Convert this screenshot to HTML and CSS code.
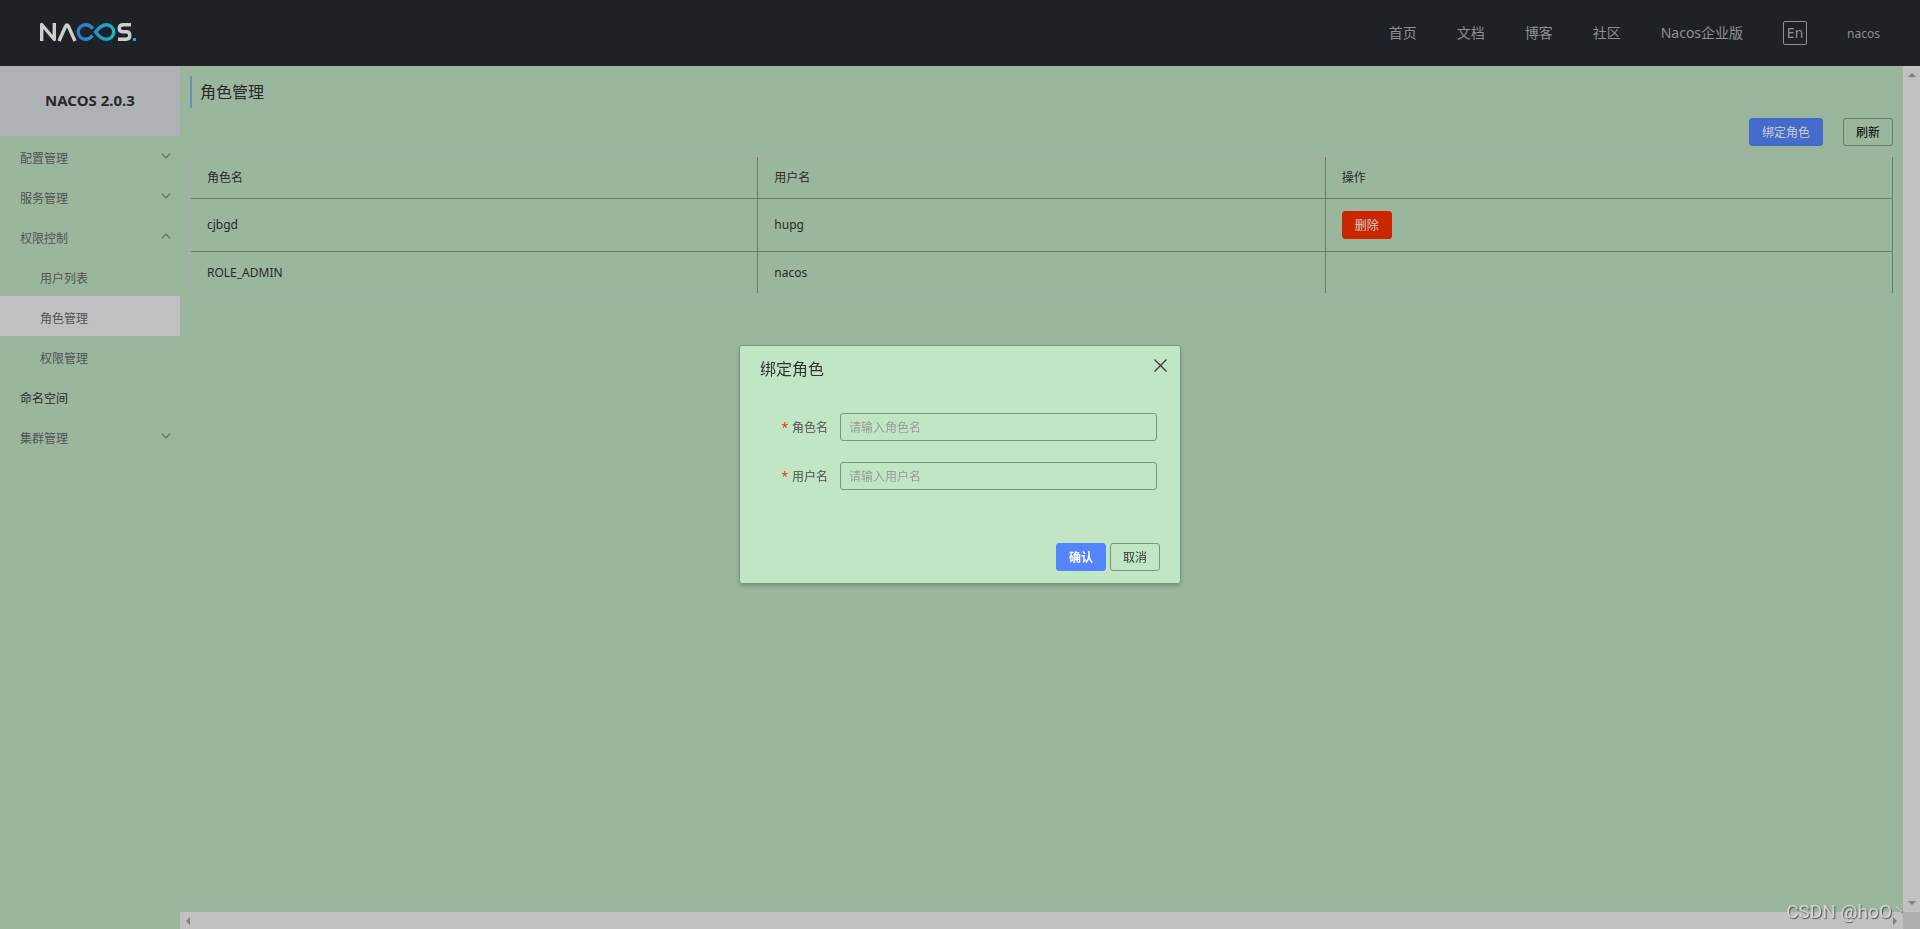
FILE: index.html
```html
<!DOCTYPE html>
<html lang="zh-CN">
<head>
<meta charset="utf-8">
<title>Nacos</title>
<link rel="stylesheet" href="styles.css">
</head>
<body>
<div class="app">
  <header class="header">
    <a class="logo" href="#" aria-label="Nacos">
      <svg width="98" height="20" viewBox="0 0 98 20" fill="none" stroke-width="3.4" stroke-linejoin="round">
        <defs>
          <linearGradient id="loop" gradientUnits="userSpaceOnUse" x1="36" y1="0" x2="76" y2="0">
            <stop offset="0" stop-color="#3571d2"/>
            <stop offset="1" stop-color="#13b9c9"/>
          </linearGradient>
        </defs>
        <g stroke="#cdcdcd">
          <path d="M1.7 19V2.5L14.3 17.500V1"/>
          <path d="M19 19L25.500 4.500Q27 1.500 28.500 4.500L35 19"/>
          <path d="M91 2.700H83.500Q79.200 2.700 79.200 6.200T83.500 9.800H86Q89.800 9.800 89.800 13.500T86 17.300H78"/>
        </g>
        <path stroke="url(#loop)" d="M53 6.500Q49.500 2.700 45.500 2.700A7.300 7.300 0 0 0 45.500 17.300Q49.500 17.300 52.500 13.500"/>
        <path stroke="url(#loop)" d="M55.500 10Q61 2.700 66.500 2.700A7.300 7.300 0 0 1 66.500 17.300Q61 17.300 55.500 10Z"/>
        <rect x="93" y="16" width="3" height="3" fill="#13b9c9"/>
      </svg>
    </a>
    <nav class="nav">
      <a href="#">首页</a>
      <a href="#">文档</a>
      <a href="#">博客</a>
      <a href="#">社区</a>
      <a href="#">Nacos企业版</a>
      <button class="lang" type="button">En</button>
      <a class="user" href="#">nacos</a>
    </nav>
  </header>
  <div class="body">
    <aside class="sidebar">
      <h1 class="version">NACOS 2.0.3</h1>
      <ul class="menu">
        <li><a href="#">配置管理<svg class="arrow" viewBox="0 0 8 5"><path d="M.5.5L4 4L7.500.5"/></svg></a></li>
        <li><a href="#">服务管理<svg class="arrow" viewBox="0 0 8 5"><path d="M.5.5L4 4L7.500.5"/></svg></a></li>
        <li><a href="#">权限控制<svg class="arrow" viewBox="0 0 8 5"><path d="M.5 4.500L4 1L7.500 4.500"/></svg></a>
          <ul class="submenu">
            <li><a href="#">用户列表</a></li>
            <li><a class="active" href="#">角色管理</a></li>
            <li><a href="#">权限管理</a></li>
          </ul>
        </li>
        <li><a class="plain" href="#">命名空间</a></li>
        <li><a href="#">集群管理<svg class="arrow" viewBox="0 0 8 5"><path d="M.5.5L4 4L7.500.5"/></svg></a></li>
      </ul>
    </aside>
    <div class="viewport">
      <main class="content">
        <h2 class="page-title">角色管理</h2>
        <div class="toolbar">
          <button class="btn primary" type="button">绑定角色</button>
          <button class="btn" type="button">刷新</button>
        </div>
        <table class="roles">
          <thead>
            <tr><th>角色名</th><th>用户名</th><th>操作</th></tr>
          </thead>
          <tbody>
            <tr><td>cjbgd</td><td>hupg</td><td class="action"><button class="btn danger" type="button">删除</button></td></tr>
            <tr><td>ROLE_ADMIN</td><td>nacos</td><td></td></tr>
          </tbody>
        </table>
      </main>
      <div class="bar vertical"><i class="up"></i><i class="down"></i></div>
      <div class="bar horizontal"><i class="left"></i><i class="right"></i></div>
      <div class="corner"></div>
    </div>
  </div>
</div>
<div class="overlay">
  <form class="dialog" role="dialog" aria-labelledby="dialog-title">
    <div class="dialog-head">
      <h2 id="dialog-title">绑定角色</h2>
      <button class="close" type="button" aria-label="关闭"><svg width="13" height="13" viewBox="0 0 13 13"><path d="M.5.5L12.500 12.500M12.500.5L.5 12.500"/></svg></button>
    </div>
    <div class="fields">
      <div class="field"><label for="role">角色名</label><input id="role" type="text" placeholder="请输入角色名"></div>
      <div class="field"><label for="username">用户名</label><input id="username" type="text" placeholder="请输入用户名"></div>
    </div>
    <div class="dialog-foot">
      <button class="btn confirm" type="button">确认</button>
      <button class="btn cancel" type="button">取消</button>
    </div>
  </form>
</div>
<div class="watermark">CSDN @hoO<span class="tail">丶</span></div>
</body>
</html>
```
FILE: styles.css
```css
* { box-sizing: border-box; }

body {
  margin: 0;
  overflow: hidden;
  background: #9ab79e;
  color: #292929;
  font: 12px/18px "Noto Sans", "Noto Sans CJK SC", sans-serif;
}

a { color: inherit; text-decoration: none; }
h1, h2 { margin: 0; font-weight: 400; }
ul { margin: 0; padding: 0; list-style: none; }
button, input { font: inherit; color: inherit; }

.app { display: flex; flex-direction: column; height: 100vh; }

.header {
  display: flex;
  align-items: center;
  justify-content: space-between;
  height: 66px;
  flex: none;
  padding: 0 40px;
  background: #1e2126;
  color: #8f9093;
}
.logo { padding-bottom: 2px; }
.logo svg { display: block; }
.nav { display: flex; align-items: center; gap: 40px; font-size: 14px; }
.lang {
  width: 24px;
  height: 24px;
  padding: 0;
  border: 1px solid #8f9093;
  border-radius: 2px;
  background: none;
  line-height: 20px;
}
.user { padding-top: 2px; font-size: 12px; }

.body { display: flex; flex: 1; min-height: 0; }

.sidebar { flex: none; width: 180px; color: #525252; }
.version {
  height: 70px;
  background: #aeb1b6;
  color: #292929;
  font-size: 15px;
  font-weight: 700;
  line-height: 68px;
  text-align: center;
}
.menu a {
  display: flex;
  justify-content: space-between;
  height: 40px;
  padding: 0 9px 0 20px;
  line-height: 45px;
}
.menu .submenu a { padding-left: 40px; }
.menu .active { background: #c0bfc4; }
.menu .plain { color: #292929; }
.arrow {
  align-self: center;
  width: 10px;
  height: 6px;
  fill: none;
  stroke: #5f6b61;
}

.viewport {
  display: grid;
  grid-template: minmax(0, 1fr) 17px / minmax(0, 1fr) 17px;
  flex: 1;
}
.content { padding: 10px; }
.page-title {
  height: 32px;
  padding-left: 8px;
  border-left: 2px solid #6b8fc0;
  font-size: 16px;
  line-height: 32px;
}
.toolbar {
  display: flex;
  justify-content: flex-end;
  gap: 20px;
  padding: 10px 0;
}

.btn {
  height: 28px;
  padding: 2px 12px 0;
  border: 1px solid #667b69;
  border-radius: 3px;
  background: none;
  color: #000;
  line-height: 24px;
}
.primary { border-color: #446acc; background: #446acc; color: #cdcdcd; }
.danger { border-color: #cc2600; background: #cc2600; color: #cdcdcd; }

.roles {
  width: 100%;
  border: 1px solid #a9acad;
  border-right: 0;
  border-collapse: separate;
  border-spacing: 0;
  table-layout: fixed;
}
.roles th, .roles td {
  height: 42px;
  padding: 0 16px;
  border-right: 1px solid #667b69;
  border-bottom: 1px solid #667b69;
  font-weight: 400;
  text-align: left;
}
.roles .action { height: 53px; }
.roles tbody tr:last-child td { height: 41px; border-bottom: 0; }

.bar { display: flex; justify-content: space-between; align-items: center; background: #c1c1c1; }
.vertical { flex-direction: column; padding: 7px 0; }
.horizontal { padding: 0 6px; }
.corner { background: #afafaf; }
.bar i { border: 4px solid transparent; }
.bar .up { border-top: 0; border-bottom-color: #808080; }
.bar .down { border-bottom: 0; border-top-color: #808080; }
.bar .left { border-left: 0; border-right-color: #808080; }
.bar .right { border-right: 0; border-left-color: #808080; }

.overlay {
  position: fixed;
  inset: 0;
  display: flex;
  align-items: center;
  justify-content: center;
}
.dialog {
  width: 442px;
  padding: 8px 20px 12px;
  border: 1px solid #7b937f;
  border-radius: 3px;
  background: #c1e6c6;
  color: #333;
  box-shadow: 0 2px 4px rgba(0, 0, 0, .2);
}
.dialog-head { display: flex; justify-content: space-between; align-items: flex-start; }
.dialog-head h2 { font-size: 16px; line-height: 30px; }
.close {
  display: flex;
  margin-right: -12px;
  padding: 5px;
  border: 0;
  background: none;
}
.close path { stroke: #333; stroke-width: 1.2; }
.fields { display: grid; gap: 21px; padding: 29px 3px 53px 0; }
.field { display: flex; align-items: center; gap: 12px; }
.field label { width: 68px; padding-top: 2px; color: #666; font-weight: 500; text-align: right; }
.field label::before { content: "*"; margin-right: 4px; color: #ff3000; }
.field input {
  flex: 1;
  min-width: 0;
  height: 28px;
  padding: 0 8px;
  border: 1px solid #7b937f;
  border-radius: 3px;
  background: none;
}
.field input::placeholder { color: #999; }
.dialog-foot { display: flex; justify-content: flex-end; gap: 4px; }
.confirm { border-color: #5584ff; background: #5584ff; color: #fff; font-weight: 700; }
.cancel { border-color: #7b937f; color: #333; }

.watermark {
  position: fixed;
  right: 14px;
  bottom: 5px;
  color: rgba(225, 225, 225, .85);
  font: 19px/24px Roboto, "Noto Sans CJK SC", sans-serif;
  text-shadow: 1px 1px 1px rgba(60, 60, 60, .8);
}
.tail { font-size: 14px; line-height: 1; vertical-align: 3px; }
```
